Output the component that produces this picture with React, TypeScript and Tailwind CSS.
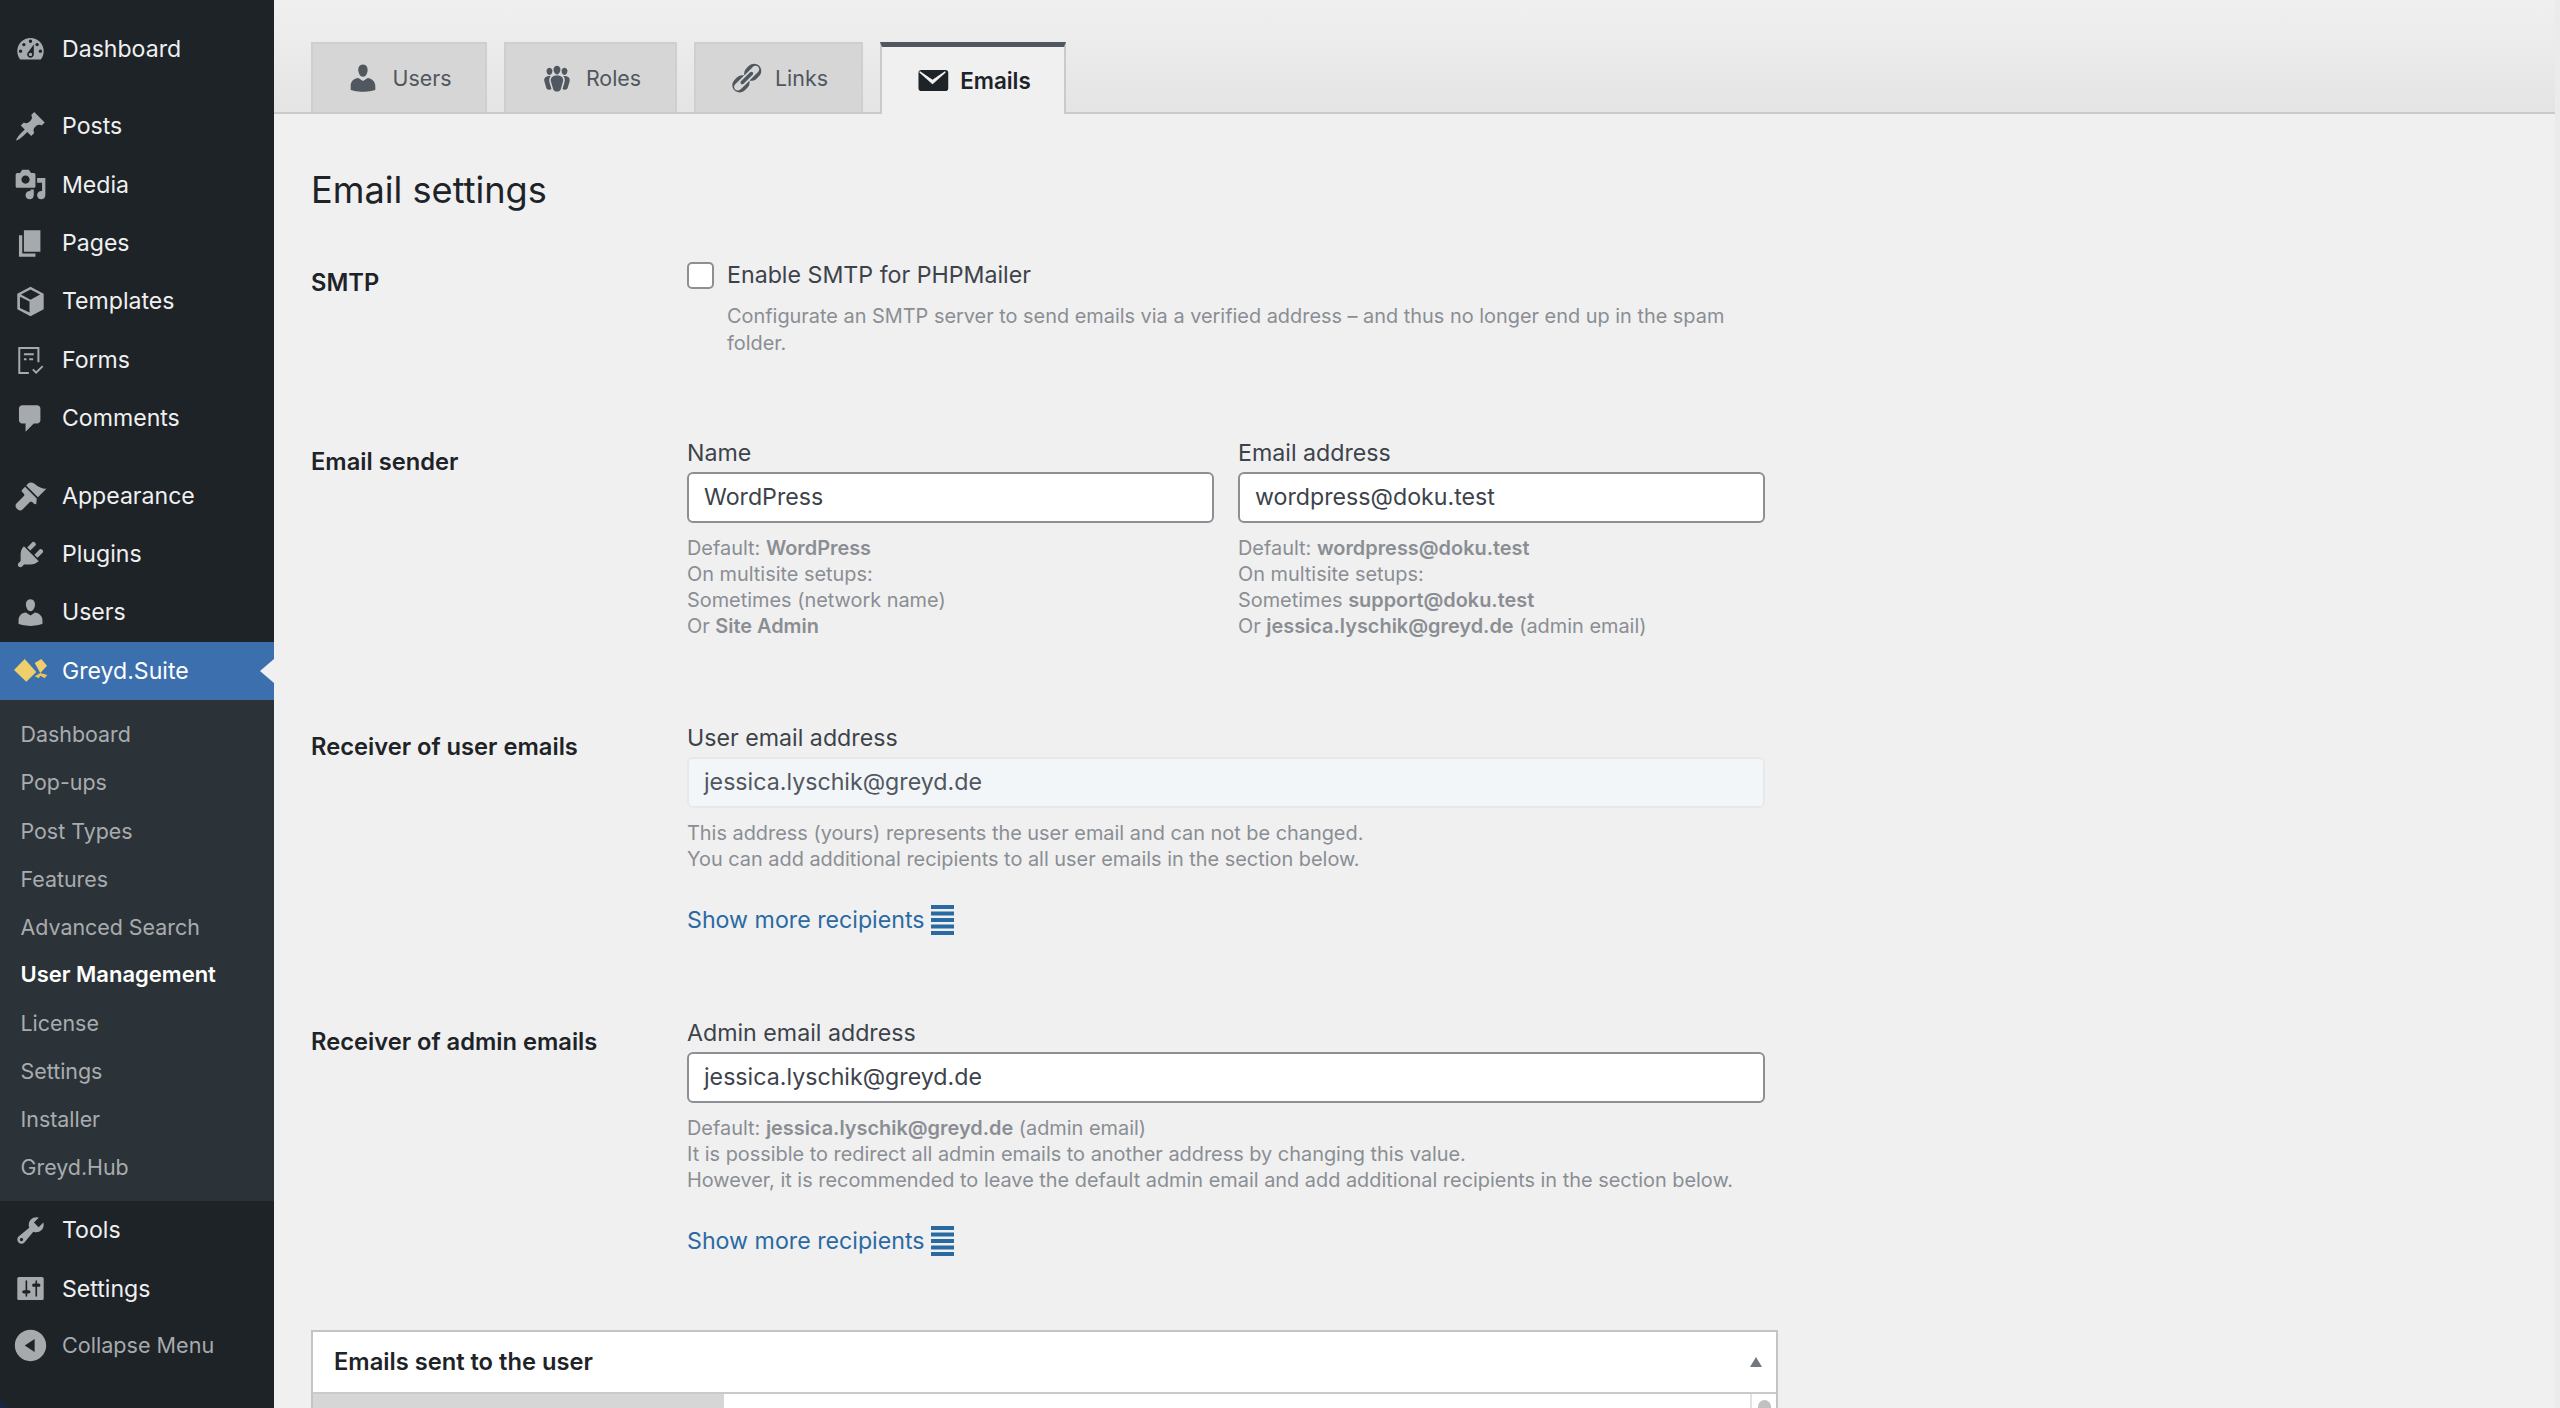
import type { ReactNode } from "react";

function Dash({ d, className = "h-[33px] w-[33px]" }: { d: string; className?: string }) {
  return (
    <svg viewBox="0 0 20 20" className={className} fill="currentColor" fillRule="evenodd">
      <path d={d} />
    </svg>
  );
}

const icons = {
  dashboard:
    "M3.76 16h12.48c1.1-1.37 1.76-3.11 1.76-5 0-4.42-3.58-8-8-8s-8 3.58-8 8c0 1.89.66 3.63 1.76 5zM10 4c.55 0 1 .45 1 1s-.45 1-1 1-1-.45-1-1 .45-1 1-1zM6 6c.55 0 1 .45 1 1s-.45 1-1 1-1-.45-1-1 .45-1 1-1zm8 0c.55 0 1 .45 1 1s-.45 1-1 1-1-.45-1-1 .45-1 1-1zm-5.37 5.55L12 7v6c0 1.1-.9 2-2 2s-2-.9-2-2c0-.57.24-1.08.63-1.45zM4 10c.55 0 1 .45 1 1s-.45 1-1 1-1-.45-1-1 .45-1 1-1zm12 0c.55 0 1 .45 1 1s-.45 1-1 1-1-.45-1-1 .45-1 1-1zm-5 3c0-.55-.45-1-1-1s-1 .45-1 1 .45 1 1 1 1-.45 1-1z",
  posts:
    "M10.44 3.02l1.82-1.82 6.36 6.35-1.83 1.82c-1.05-.68-2.48-.57-3.41.36l-.75.75c-.92.93-1.04 2.35-.35 3.41l-1.83 1.82-2.41-2.41-2.8 2.79c-.42.42-3.38 2.71-3.8 2.29s1.86-3.39 2.28-3.81l2.79-2.79L4.1 9.36l1.83-1.82c1.05.69 2.48.57 3.4-.36l.75-.75c.93-.92 1.05-2.35.36-3.41z",
  media:
    "M13 11V4c0-.55-.45-1-1-1h-1.67L9 1H5L3.67 3H2c-.55 0-1 .45-1 1v7c0 .55.45 1 1 1h10c.55 0 1-.45 1-1zM7 4.5c1.38 0 2.5 1.12 2.5 2.5S8.38 9.5 7 9.5 4.5 8.38 4.5 7 5.62 4.5 7 4.5zM14 6h5v10.5c0 1.38-1.12 2.5-2.5 2.5S14 17.88 14 16.5s1.12-2.5 2.5-2.5c.17 0 .34.02.5.05V9h-3V6zm-4 8.05V13h2v3.5c0 1.38-1.12 2.5-2.5 2.5S7 17.88 7 16.5 8.12 14 9.5 14c.17 0 .34.02.5.05z",
  pages: "M6 15V2h10v13H6zm-1 1h8v2H3V5h2v11z",
  comments: "M5 2h9c1.1 0 2 .9 2 2v7c0 1.1-.9 2-2 2h-2l-5 5v-5H5c-1.1 0-2-.9-2-2V4c0-1.1.9-2 2-2z",
  appearance:
    "M14.48 11.06L7.41 3.99l1.5-1.5c.5-.56 2.3-.47 3.51.32 1.21.8 1.43 1.28 2.91 2.1 1.18.64 2.45 1.26 4.45.85zM13.77 11.77L6.7 4.7 4.93 6.47c-.39.39-.39 1.02 0 1.41l1.06 1.06c.39.39.39 1.03 0 1.42L1.5 14.85c-.78.78-.78 2.05 0 2.83l.82.82c.78.78 2.05.78 2.83 0l4.49-4.49c.39-.39 1.03-.39 1.42 0l1.06 1.06c.39.39 1.02.39 1.41 0z",
  plugins:
    "M13.11 4.36L9.87 7.6 8 5.73l3.24-3.24c.35-.34 1.05-.2 1.56.32.52.51.66 1.21.31 1.55zm-8 1.77l.91-1.12 9.01 9.01-1.19.84c-.71.71-2.63 1.16-3.82 1.16H6.14L4.9 17.26c-.59.59-1.54.59-2.12 0-.59-.58-.59-1.53 0-2.12l1.24-1.24v-3.88c0-1.13.4-3.19 1.09-3.89zm7.26 3.97l3.24-3.24c.34-.35 1.04-.21 1.55.31.52.51.66 1.21.31 1.55l-3.24 3.25z",
  users:
    "M10 9.25c-2.27 0-2.73-3.44-2.73-3.44C7 4.02 7.82 2 9.97 2c2.16 0 2.98 2.02 2.71 3.81 0 0-.41 3.44-2.68 3.44zm0 2.57L12.72 10c2.39 0 4.52 2.33 4.52 4.53v2.49s-3.65 1.13-7.24 1.13c-3.65 0-7.24-1.13-7.24-1.13v-2.49c0-2.25 1.94-4.48 4.47-4.48z",
  tools:
    "M16.68 9.77c-1.34 1.34-3.3 1.67-4.95.99l-5.41 6.52c-.99.99-2.59.99-3.58 0s-.99-2.59 0-3.57l6.52-5.42c-.68-1.65-.35-3.61.99-4.95 1.28-1.28 3.12-1.62 4.72-1.06l-2.89 2.89 2.82 2.82 2.86-2.87c.53 1.58.18 3.39-1.08 4.67zM3.81 16.21c.4.39 1.04.39 1.43 0 .4-.4.4-1.04 0-1.43-.39-.4-1.03-.4-1.43 0-.39.39-.39 1.03 0 1.43z",
  settings:
    "M18 16V4c0-.55-.45-1-1-1H3c-.55 0-1 .45-1 1v12c0 .55.45 1 1 1h14c.55 0 1-.45 1-1zM8 11h1c.55 0 1 .45 1 1s-.45 1-1 1H8v1.5c0 .28-.22.5-.5.5s-.5-.22-.5-.5V13H6c-.55 0-1-.45-1-1s.45-1 1-1h1V5.5c0-.28.22-.5.5-.5s.5.22.5.5V11zm5-2h-1c-.55 0-1-.45-1-1s.45-1 1-1h1V5.5c0-.28.22-.5.5-.5s.5.22.5.5V7h1c.55 0 1 .45 1 1s-.45 1-1 1h-1v5.5c0 .28-.22.5-.5.5s-.5-.22-.5-.5V9z",
  collapse: "M10 .5c5.25 0 9.5 4.25 9.5 9.5s-4.25 9.5-9.5 9.5S.5 15.25.5 10 4.75.5 10 .5zM12.5 14V6L6.5 10z",
  groups:
    "M8.03 4.46c-.29 1.28.55 3.46 1.97 3.46 1.41 0 2.25-2.18 1.96-3.46-.22-.98-1.08-1.63-1.96-1.63-.89 0-1.74.65-1.97 1.63zm-4.13.9c-.25 1.08.47 2.93 1.67 2.93s1.92-1.85 1.67-2.93c-.19-.83-.92-1.39-1.67-1.39s-1.48.56-1.67 1.39zm8.86 0c-.25 1.08.47 2.93 1.66 2.93 1.2 0 1.92-1.85 1.67-2.93-.19-.83-.92-1.39-1.67-1.39-.74 0-1.47.56-1.66 1.39zm-.59 11.43l1.25-4.3C14.2 10 12.71 8.47 10 8.47c-2.72 0-4.21 1.53-3.44 4.02l1.26 4.3C8.05 17.51 9 18 10 18c.98 0 1.94-.49 2.17-1.21zm-6.1-7.63c-.49.67-.96 1.83-.42 3.59l1.12 3.79c-.34.2-.77.31-1.2.31-.85 0-1.65-.41-1.85-1.03l-1.07-3.65c-.65-2.11.61-3.4 2.92-3.4.27 0 .54.02.79.06-.1.1-.2.22-.29.33zm8.35-.39c2.31 0 3.58 1.29 2.92 3.4l-1.07 3.65c-.2.62-1 1.03-1.85 1.03-.43 0-.86-.11-1.2-.31l1.11-3.77c.55-1.78.08-2.94-.42-3.61-.08-.11-.18-.23-.28-.33.25-.04.51-.06.79-.06z",
  links:
    "M17.74 2.76c1.68 1.69 1.68 4.41 0 6.1l-1.53 1.52c-1.12 1.12-2.7 1.5-4.13 1.14L15.6 8l.76-.76.76-.76c.84-.84.84-2.2 0-3.04-.84-.85-2.2-.85-3.04 0l-.76.76-.76.76-3.52 3.52c-.36-1.43.02-3.01 1.14-4.13l1.52-1.53c1.69-1.68 4.42-1.68 6.1 0zM8.59 13.43l5.34-5.34c.42-.42.42-1.1 0-1.52-.44-.43-1.13-.39-1.53 0l-5.33 5.34c-.42.42-.42 1.1 0 1.52.44.43 1.13.39 1.52 0zm-.76 2.29l4.14-4.15c.38 1.44 0 3.02-1.14 4.14l-1.52 1.53c-1.68 1.68-4.41 1.68-6.1 0-1.68-1.68-1.68-4.42 0-6.1l1.53-1.52c1.12-1.14 2.7-1.52 4.14-1.14L4.4 12.9l-.76.76c-.84.84-.84 2.2 0 3.04.84.85 2.2.85 3.04 0z",
  email:
    "M19 14.5v-9c0-.83-.67-1.5-1.5-1.5H3.49c-.83 0-1.5.67-1.5 1.5v9c0 .83.67 1.5 1.5 1.5H17.5c.83 0 1.5-.67 1.5-1.5zm-1.6-9l-6.9 6.2-.5.4-.5-.4-6.9-6.2c-.3-.3 0-1 .5-.7L10 9.6l6.9-4.8c.5-.3.8.4.5.7z",
};

function CubeIcon() {
  return (
    <svg viewBox="0 0 20 20" className="h-[33px] w-[33px]" fill="currentColor">
      <path d="M10 1 2 5.300v9.400l8 4.300 8-4.300V5.300L10 1Zm0 1.700 5.800 3.100L10 8.900 4.200 5.800 10 2.700Zm-.6 7.300v6.700L3.600 14V7.100l5.800 2.900Z" />
    </svg>
  );
}

function FormsIcon() {
  return (
    <svg viewBox="0 0 20 20" className="h-[33px] w-[33px]" fill="none" stroke="currentColor" strokeWidth="1.2">
      <path d="M9 17.600H3.200V2.400h11.600V11" />
      <path d="M6 6.200h6M6 9.200h1.600M9.200 9.200h2.400M11.400 15.400l2 2 4-4" />
    </svg>
  );
}

function GreydLogo() {
  return (
    <svg viewBox="0 0 34 23" className="h-[23px] w-[34px]" fill="#efcf6c" strokeLinejoin="round">
      <path d="M0 11 10.700 0 22.300 13 12.300 22.700Z" />
      <path d="M20.700 4 27.300 0 33 6.700 26.300 14Z" />
      <path d="M26.300 14 33.300 16 30.700 19.300 26.300 16.700 24.700 19.300 20.700 17.300Z" fill="#eac45c" />
    </svg>
  );
}

const topItems: [string, ReactNode][] = [
  ["Posts", <Dash d={icons.posts} />],
  ["Media", <Dash d={icons.media} />],
  ["Pages", <Dash d={icons.pages} />],
  ["Templates", <CubeIcon />],
  ["Forms", <FormsIcon />],
  ["Comments", <Dash d={icons.comments} />],
];

const midItems: [string, ReactNode][] = [
  ["Appearance", <Dash d={icons.appearance} />],
  ["Plugins", <Dash d={icons.plugins} />],
  ["Users", <Dash d={icons.users} />],
];

const subItems = [
  "Dashboard",
  "Pop-ups",
  "Post Types",
  "Features",
  "Advanced Search",
  "User Management",
  "License",
  "Settings",
  "Installer",
  "Greyd.Hub",
];

function MenuItem({ label, icon }: { label: string; icon: ReactNode }) {
  return (
    <div className="flex h-[58.4px] items-center text-[23.100px] text-[#f0f0f1]">
      <span className="flex w-[62px] justify-center pr-[1px] text-[#a7aaad]">{icon}</span>
      {label}
    </div>
  );
}

function Sidebar() {
  return (
    <aside className="h-[1408px] w-[274px] shrink-0 rounded-bl-[14px] bg-[#1d2327] pt-[20px]">
      <MenuItem label="Dashboard" icon={<Dash d={icons.dashboard} />} />
      <div className="h-[19px]" />
      {topItems.map(([label, icon]) => (
        <MenuItem key={label} label={label} icon={icon} />
      ))}
      <div className="h-[19px]" />
      {midItems.map(([label, icon]) => (
        <MenuItem key={label} label={label} icon={icon} />
      ))}
      <div className="relative flex h-[58px] items-center bg-[#3b6fae] text-[23.100px] text-white">
        <span className="flex w-[62px] justify-center pr-[1px]">
          <GreydLogo />
        </span>
        Greyd.Suite
        <span className="absolute right-0 top-[17px] h-0 w-0 border-y-[12px] border-r-[14px] border-y-transparent border-r-[#f0f0f1]" />
      </div>
      <div className="bg-[#2c3338] pb-[10px] pt-[10.500px]">
        {subItems.map((s) => (
          <div
            key={s}
            className={
              s === "User Management"
                ? "flex h-[48.100px] items-center pl-[20.500px] text-[22px] font-semibold text-white"
                : "flex h-[48.100px] items-center pl-[20.500px] text-[21.400px] text-[#a9acaf]"
            }
          >
            {s}
          </div>
        ))}
      </div>
      <MenuItem label="Tools" icon={<Dash d={icons.tools} />} />
      <MenuItem label="Settings" icon={<Dash d={icons.settings} />} />
      <div className="flex h-[54px] items-center text-[21.600px] text-[#a7aaad]">
        <span className="flex w-[62px] justify-center pr-[1px]">
          <Dash d={icons.collapse} />
        </span>
        Collapse Menu
      </div>
    </aside>
  );
}

function Tab({ label, icon, w }: { label: string; icon: string; w: string }) {
  return (
    <div
      className={`flex h-[70px] items-center justify-center gap-[12px] border-2 border-b-0 border-[#cfcfcf] bg-[#d6d6d6] text-[21.400px] text-[#50575e] ${w}`}
    >
      <Dash d={icon} className="h-[34px] w-[34px]" />
      {label}
    </div>
  );
}

function TabBar() {
  return (
    <div className="flex h-[114px] items-end gap-[17px] border-b-2 border-[#c9cacc] bg-gradient-to-b from-[#f0f0f1] to-[#e4e4e4] pl-[37px]">
      <div className="flex gap-[17px]">
        <Tab label="Users" icon={icons.users} w="w-[176px]" />
        <Tab label="Roles" icon={icons.groups} w="w-[173px]" />
        <Tab label="Links" icon={icons.links} w="w-[169px]" />
      </div>
      <div className="-mb-[2px] flex h-[72px] w-[186px] items-center justify-center gap-[10px] border-x-2 border-t-[5px] border-x-[#c9cacc] border-t-[#50575e] bg-[#f0f0f1] text-[22.400px] font-semibold text-[#1d2327]">
        <Dash d={icons.email} className="h-[35px] w-[35px]" />
        Emails
      </div>
    </div>
  );
}

function Field({ label, value, disabled }: { label: string; value: string; disabled?: boolean }) {
  return (
    <>
      <div className="h-[26px] text-[23.200px] leading-[26px] text-[#3c434a]">{label}</div>
      <div
        className={
          disabled
            ? "mt-[6px] flex h-[51px] items-center rounded-[6px] border-2 border-[#e6e8ea] bg-[#f3f6f9] pl-[15px] text-[23.200px] text-[#50575e]"
            : "mt-[6px] flex h-[51px] items-center rounded-[6px] border-2 border-[#8c8f94] bg-white pl-[15px] text-[23.200px] text-[#3c434a]"
        }
      >
        {value}
      </div>
    </>
  );
}

function Help({ children }: { children: ReactNode }) {
  return <div className="mt-[12px] text-[19.900px] leading-[26px] text-[#8a8e93]">{children}</div>;
}

function Strong({ children }: { children: ReactNode }) {
  return <b className="font-semibold">{children}</b>;
}

function ShowMore() {
  return (
    <div className="mt-[33px] flex h-[30px] items-center gap-[6px] text-[23.200px] text-[#2a6aa3]">
      Show more recipients
      <svg viewBox="0 0 23 30" className="h-[30px] w-[23px]" fill="#2a6aa3">
        <rect y="0" width="23" height="4" />
        <rect y="6.500" width="23" height="4" />
        <rect y="13" width="23" height="4" />
        <rect y="19.500" width="23" height="4" />
        <rect y="26" width="23" height="4" />
      </svg>
    </div>
  );
}

function Row({ title, children, className }: { title: string; children: ReactNode; className: string }) {
  return (
    <div className={`flex ${className}`}>
      <div className="w-[376px] shrink-0 pt-[9px] text-[23.700px] font-semibold leading-[26px] text-[#1d2327]">
        {title}
      </div>
      <div className="w-[1078px]">{children}</div>
    </div>
  );
}

export default function App() {
  return (
    <div className="flex h-[1408px] w-[2560px] overflow-hidden bg-[#16263f] font-['Inter',sans-serif]">
      <Sidebar />
      <main className="h-[1408px] flex-1 border-r-[5px] border-[#ebebeb] bg-[#f0f0f1]">
        <TabBar />
        <div className="pl-[37px]">
          <h1 className="mt-[53px] text-[36.200px] leading-[46px] text-[#1d2327]">Email settings</h1>

          <Row title="SMTP" className="mt-[48px]">
            <label className="flex h-[27px] items-center gap-[13px] pt-[1px] text-[23.200px] text-[#3c434a]">
              <span className="h-[27px] w-[27px] rounded-[5px] border-2 border-[#8c8f94] bg-white" />
              Enable SMTP for PHPMailer
            </label>
            <div className="mt-[15px] pl-[40px] text-[19.900px] leading-[26.500px] text-[#8a8e93]">
              Configurate an SMTP server to send emails via a verified address – and thus no longer end up in the spam
              <br />
              folder.
            </div>
          </Row>

          <Row title="Email sender" className="mt-[84px]">
            <div className="flex gap-[24px]">
              <div className="w-[527px]">
                <Field label="Name" value="WordPress" />
                <Help>
                  Default: <Strong>WordPress</Strong>
                  <br />
                  On multisite setups:
                  <br />
                  Sometimes (network name)
                  <br />
                  Or <Strong>Site Admin</Strong>
                </Help>
              </div>
              <div className="w-[527px]">
                <Field label="Email address" value="wordpress@doku.test" />
                <Help>
                  Default: <Strong>wordpress@doku.test</Strong>
                  <br />
                  On multisite setups:
                  <br />
                  Sometimes <Strong>support@doku.test</Strong>
                  <br />
                  Or <Strong>jessica.lyschik@greyd.de</Strong> (admin email)
                </Help>
              </div>
            </div>
          </Row>

          <Row title="Receiver of user emails" className="mt-[86px]">
            <Field label="User email address" value="jessica.lyschik@greyd.de" disabled />
            <Help>
              This address (yours) represents the user email and can not be changed.
              <br />
              You can add additional recipients to all user emails in the section below.
            </Help>
            <ShowMore />
          </Row>

          <Row title="Receiver of admin emails" className="mt-[85px]">
            <Field label="Admin email address" value="jessica.lyschik@greyd.de" />
            <Help>
              Default: <Strong>jessica.lyschik@greyd.de</Strong> (admin email)
              <br />
              It is possible to redirect all admin emails to another address by changing this value.
              <br />
              However, it is recommended to leave the default admin email and add additional recipients in the section
              below.
            </Help>
            <ShowMore />
          </Row>

          <section className="mt-[74px] w-[1467px] border-2 border-[#c3c4c7] bg-white">
            <div className="flex h-[62px] items-center justify-between border-b-2 border-[#c9cacc] pl-[21px] pr-[14px] text-[23.700px] font-semibold text-[#1d2327]">
              Emails sent to the user
              <span className="h-0 w-0 border-x-[6.500px] border-b-[10px] border-x-transparent border-b-[#72777c]" />
            </div>
            <div className="flex h-[40px]">
              <div className="w-[411px] bg-[#d6d6d6]" />
              <div className="flex-1" />
              <div className="flex w-[26px] justify-center border-l-2 border-[#e2e2e2] pt-[6px]">
                <div className="h-[30px] w-[13px] rounded-full bg-[#c1c1c1]" />
              </div>
            </div>
          </section>
        </div>
      </main>
    </div>
  );
}
